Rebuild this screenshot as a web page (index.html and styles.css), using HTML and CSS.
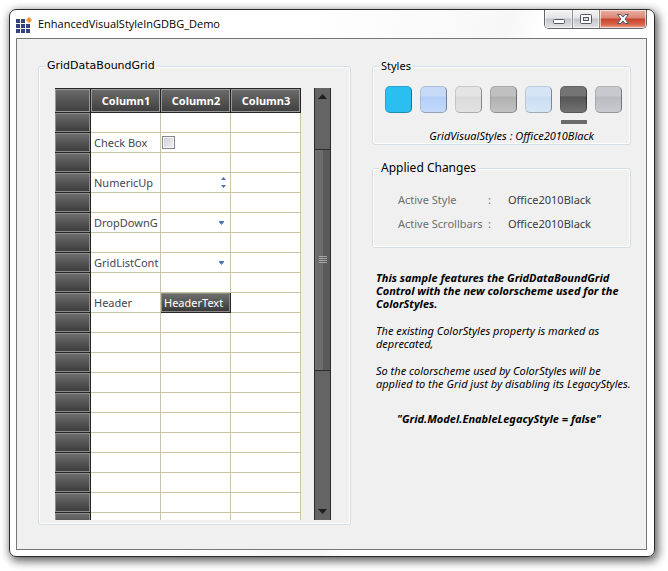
FILE: index.html
```html
<!DOCTYPE html>
<html lang="en">
<head>
<meta charset="utf-8">
<title>EnhancedVisualStyleInGDBG_Demo</title>
<link rel="stylesheet" href="styles.css">
</head>
<body>
<main class="window">
  <header class="titlebar">
    <svg class="app-icon" width="16" height="16" viewBox="0 0 16 16" aria-hidden="true">
      <g fill="#35427e">
        <path d="M0 2h4v4H0zM5 2h4v4H5zM0 7h4v4H0zM5 7h4v4H5zM10 7h4v4h-4zM0 12h4v4H0zM5 12h4v4H5zM10 12h4v4h-4z"/>
      </g>
      <path fill="#f29132" d="M13 0l3 3-3 3-3-3z"/>
    </svg>
    <h1 class="title">EnhancedVisualStyleInGDBG_Demo</h1>
    <div class="caption-buttons">
      <button class="caption" type="button" aria-label="Minimize">
        <svg width="14" height="12" viewBox="0 0 14 12"><rect x="1.5" y="6.5" width="11" height="4" rx="1" fill="#fff" stroke="#535666"/></svg>
      </button>
      <button class="caption" type="button" aria-label="Maximize">
        <svg width="14" height="12" viewBox="0 0 14 12"><rect x="1.5" y="1.5" width="11" height="9" rx="1" fill="#fff" stroke="#535666"/><rect x="4.5" y="4.5" width="5" height="3" fill="#ddd" stroke="#535666"/></svg>
      </button>
      <button class="caption close" type="button" aria-label="Close">
        <svg width="14" height="12" viewBox="0 0 14 12"><path d="M1.500 1.500h3.500l2 2.500 2-2.500h3.500l-3.500 4.500 3.500 4.500h-3.500l-2-2.500-2 2.500h-3.500l3.500-4.500z" fill="#fff" stroke="#535666" stroke-linejoin="round"/></svg>
      </button>
    </div>
  </header>
  <div class="client">
    <fieldset class="group grid-group">
      <legend>GridDataBoundGrid</legend>
      <div class="grid-area">
        <div class="grid-view">
          <table class="grid">
            <thead>
              <tr><th class="corner"></th><th scope="col">Column1</th><th scope="col">Column2</th><th scope="col">Column3</th></tr>
            </thead>
            <tbody>
              <tr><th></th><td></td><td></td><td></td></tr>
              <tr><th></th><td>Check Box</td><td class="check"><input type="checkbox" aria-label="Check Box"></td><td></td></tr>
              <tr><th></th><td></td><td></td><td></td></tr>
              <tr><th></th><td>NumericUp</td><td><button class="cell-button spin" type="button" aria-label="Change number"><svg width="7" height="12" viewBox="0 0 7 12"><path d="M3.500 0L6 3H1zM3.500 11L6 8H1z"/></svg></button></td><td></td></tr>
              <tr><th></th><td></td><td></td><td></td></tr>
              <tr><th></th><td>DropDownG</td><td><button class="cell-button" type="button" aria-label="Open grid"><svg width="7" height="4" viewBox="0 0 7 4"><path d="M1 0h5v1L3.500 4 1 1z"/></svg></button></td><td></td></tr>
              <tr><th></th><td></td><td></td><td></td></tr>
              <tr><th></th><td>GridListCont</td><td><button class="cell-button" type="button" aria-label="Open list"><svg width="7" height="4" viewBox="0 0 7 4"><path d="M1 0h5v1L3.500 4 1 1z"/></svg></button></td><td></td></tr>
              <tr><th></th><td></td><td></td><td></td></tr>
              <tr><th></th><td>Header</td><td class="header-cell">HeaderText</td><td></td></tr>
              <tr><th></th><td></td><td></td><td></td></tr>
              <tr><th></th><td></td><td></td><td></td></tr>
              <tr><th></th><td></td><td></td><td></td></tr>
              <tr><th></th><td></td><td></td><td></td></tr>
              <tr><th></th><td></td><td></td><td></td></tr>
              <tr><th></th><td></td><td></td><td></td></tr>
              <tr><th></th><td></td><td></td><td></td></tr>
              <tr><th></th><td></td><td></td><td></td></tr>
              <tr><th></th><td></td><td></td><td></td></tr>
              <tr><th></th><td></td><td></td><td></td></tr>
              <tr><th></th><td></td><td></td><td></td></tr>
            </tbody>
          </table>
        </div>
        <div class="scrollbar">
          <button class="arrow" type="button" aria-label="Scroll up"><svg width="9" height="5" viewBox="0 0 9 5"><path d="M4.500 0L9 5H0z"/></svg></button>
          <div class="track-before"></div>
          <div class="thumb"><svg width="8" height="7" viewBox="0 0 8 7"><path d="M0 0h8v1H0zM0 2h8v1H0zM0 4h8v1H0zM0 6h8v1H0z"/></svg></div>
          <div class="track-after"></div>
          <button class="arrow" type="button" aria-label="Scroll down"><svg width="9" height="5" viewBox="0 0 9 5"><path d="M0 0h9L4.500 5z"/></svg></button>
        </div>
      </div>
    </fieldset>
    <div class="side">
      <fieldset class="group styles-group">
        <legend>Styles</legend>
        <div class="swatches">
          <button class="swatch metro" type="button" aria-label="Metro"></button>
          <button class="swatch blue" type="button" aria-label="Office2010Blue"></button>
          <button class="swatch silver" type="button" aria-label="Office2010Silver"></button>
          <button class="swatch gray" type="button" aria-label="Office2007Silver"></button>
          <button class="swatch sky" type="button" aria-label="Office2007Blue"></button>
          <button class="swatch black selected" type="button" aria-label="Office2010Black"></button>
          <button class="swatch steel" type="button" aria-label="Office2007Black"></button>
        </div>
        <p class="current">GridVisualStyles : Office2010Black</p>
      </fieldset>
      <fieldset class="group changes-group">
        <legend>Applied Changes</legend>
        <dl class="changes">
          <dt><span>Active Style</span><span>:</span></dt><dd>Office2010Black</dd>
          <dt><span>Active Scrollbars</span><span>:</span></dt><dd>Office2010Black</dd>
        </dl>
      </fieldset>
      <div class="notes">
        <p class="strong">This sample features the GridDataBoundGrid<br>Control with the new colorscheme used for the<br>ColorStyles.</p>
        <p>The existing ColorStyles property is marked as<br>deprecated,</p>
        <p>So the colorscheme used by ColorStyles will be<br>applied to the Grid just by disabling its LegacyStyles.</p>
        <p class="strong code">"Grid.Model.EnableLegacyStyle = false"</p>
      </div>
    </div>
  </div>
</main>
</body>
</html>
```
FILE: styles.css
```css
* {
  box-sizing: border-box;
}

body {
  display: flex;
  height: 100vh;
  margin: 0;
  padding: 9px 13px 14px 9px;
  background: #fff;
  color: #000;
  font: 11px/13px "Noto Sans", "Open Sans", sans-serif;
}

h1, p, dl, dd {
  margin: 0;
}

button {
  margin: 0;
  padding: 0;
  border: 0;
  background: none;
}

svg {
  display: block;
}

.window {
  display: flex;
  flex: 1;
  flex-direction: column;
  min-width: 0;
  padding: 0 7px 6px 6px;
  border: 1px solid #2b2b2b;
  border-radius: 7px;
  background: linear-gradient(110deg, #fff 0 35%, #f7f7f7 60%, #fff 64%);
  box-shadow: 2px 3px 10px 1px rgba(0, 0, 0, 0.65);
}

.titlebar {
  display: flex;
  align-items: flex-start;
  height: 28px;
}

.app-icon {
  margin: 7px 6px 0 0;
}

.title {
  flex: 1;
  margin-top: 6px;
  font: 11px/16px "Open Sans", sans-serif;
}

.caption-buttons {
  display: flex;
  height: 19px;
  overflow: hidden;
  border: 1px solid #62656b;
  border-top: 0;
  border-radius: 0 0 5px 5px;
}

.caption {
  display: grid;
  place-items: center;
  width: 27px;
  border-right: 1px solid #8a8c92;
  background: linear-gradient(#f4f4f4, #e4e4e4 45%, #c3c4c7 50%, #e4e4e6);
  box-shadow: inset 0 0 0 1px rgba(255, 255, 255, 0.6);
}

.caption:first-child {
  width: 28px;
}

.caption.close {
  width: 46px;
  border-right: 0;
  background: linear-gradient(#eab0a4, #dc8572 45%, #c5432a 50%, #d9634a 80%, #eda58f);
}

.client {
  display: grid;
  flex: 1;
  grid-template-columns: 313fr 259fr;
  gap: 21px;
  min-height: 0;
  padding: 19px 15px 24px 21px;
  border: 1px solid #777;
  background: #f0f0f0;
}

.group {
  min-width: 0;
  margin: 0;
  padding: 0 6px;
  border: 1px solid #d3dee8;
  border-radius: 3px;
  box-shadow: inset 0 0 0 1px #fff;
}

legend {
  height: 16px;
  padding: 0 2px;
  background: #f0f0f0;
  font: 11px/16px "Noto Sans", sans-serif;
}

.changes-group legend {
  font-size: 12px;
}

.grid-group {
  display: flex;
  min-height: 0;
}

.grid-group legend {
  font-family: "DejaVu Sans", sans-serif;
}

.grid-area {
  display: flex;
  flex: 1;
  height: 100%;
  gap: 13px;
  padding: 14px 13px 4px 10px;
}

.grid-view {
  flex: 1;
  height: 100%;
  overflow: hidden;
}

.grid {
  width: 100%;
  table-layout: fixed;
  border-spacing: 0;
  background: #fff;
}

.grid th {
  padding: 0;
}

.grid thead th {
  height: 25px;
  background: linear-gradient(#6e6e6e, #585858 45%, #3c3c3c);
  box-shadow: inset -1px -1px #252525, inset 0 1px #252525, inset -2px -2px #999, inset 1px 2px #999;
  color: #fff;
  font: bold 11px/25px "Noto Sans", sans-serif;
}

.grid .corner {
  width: 36px;
}

.grid tbody th {
  background: linear-gradient(#707070, #555 45%, #383838);
  box-shadow: inset -1px -1px #252525, inset -2px -2px #8c8c8c, inset 1px 1px #8c8c8c;
}

.grid td {
  height: 20px;
  padding: 0 3px;
  overflow: hidden;
  border: solid #cbc5a8;
  border-width: 0 1px 1px 0;
  color: #3f4650;
  line-height: 19px;
  white-space: nowrap;
}

.grid td.check {
  padding: 0 1px;
}

.check input {
  display: block;
  width: 13px;
  height: 13px;
  margin: 0;
  appearance: none;
  border: 1px solid #86868c;
  background: linear-gradient(135deg, #cbcbd6, #f3f3f6);
  box-shadow: inset 0 0 0 1px #f6f6f6;
}

.grid td.header-cell {
  border-color: #252525;
  background: linear-gradient(#707070, #585858 45%, #363636);
  box-shadow: inset 0 0 0 1px #8c8c8c;
  color: #fff;
}

.cell-button {
  display: block;
  margin: 0 2px 0 auto;
  fill: #4a74b0;
}

.cell-button.spin {
  margin-right: 0;
}

.scrollbar {
  display: flex;
  flex-direction: column;
  width: 17px;
  border: solid #2d2d2d;
  border-width: 0 1px;
  background: #646464;
}

.arrow {
  display: grid;
  flex: none;
  height: 17px;
  place-items: center;
  fill: #1e1e1e;
}

.track-before {
  flex: 44;
}

.thumb {
  display: grid;
  flex: 221;
  place-items: center;
  border: solid #2d2d2d;
  border-width: 1px 0;
  background: linear-gradient(90deg, #777 0 1px, #6c6c6c 1px 50%, #5a5a5a 50%);
  fill: #a5a5a5;
}

.track-after {
  flex: 133;
}

.side {
  min-width: 0;
}

.swatches {
  display: flex;
  gap: 8px;
  padding: 12px 0 0 6px;
}

.swatch {
  position: relative;
  width: 27px;
  height: 27px;
  border: 1px solid rgba(0, 0, 0, 0.12);
  border-right-color: rgba(0, 0, 0, 0.4);
  border-bottom-color: rgba(0, 0, 0, 0.25);
  border-radius: 5px;
}

.metro { background: #2bbef0; }
.blue { background: linear-gradient(#c6daf8 35%, #b3d0f7 40%, #c4dafa); }
.silver { background: linear-gradient(#e4e4e4 35%, #dadada 40%, #e2e2e2); }
.gray { background: linear-gradient(#c0c0c0 35%, #b0b0b0 40%, #c2c2c2); }
.sky { background: linear-gradient(#d6e5f5 35%, #cbdff3 40%, #d6e6f6); }
.black { background: linear-gradient(#747474 35%, #555 40%, #727272); }
.steel { background: linear-gradient(#c6c9ce 35%, #b8bcc1 40%, #c8cbd0); }

.selected::after {
  position: absolute;
  top: 33px;
  left: 0;
  width: 26px;
  height: 4px;
  background: #6b6b6b;
  content: "";
}

.current {
  padding: 15px 30px 0 0;
  font-style: italic;
  line-height: 16px;
  text-align: right;
}

.changes-group {
  margin-top: 15px;
}

.changes {
  display: grid;
  grid-template-columns: 93px 1fr;
  gap: 0 17px;
  padding: 12px 19px 11px;
  line-height: 24px;
  white-space: nowrap;
}

.changes dt {
  display: flex;
  justify-content: space-between;
  color: #6e6e6e;
}

.changes dd {
  color: #3c3c3c;
}

.notes {
  display: grid;
  gap: 14px;
  padding: 23px 0 0 4px;
  font-style: italic;
  white-space: nowrap;
}

.strong {
  font-weight: bold;
}

.code {
  margin: 8px 0 0 21px;
}
```
